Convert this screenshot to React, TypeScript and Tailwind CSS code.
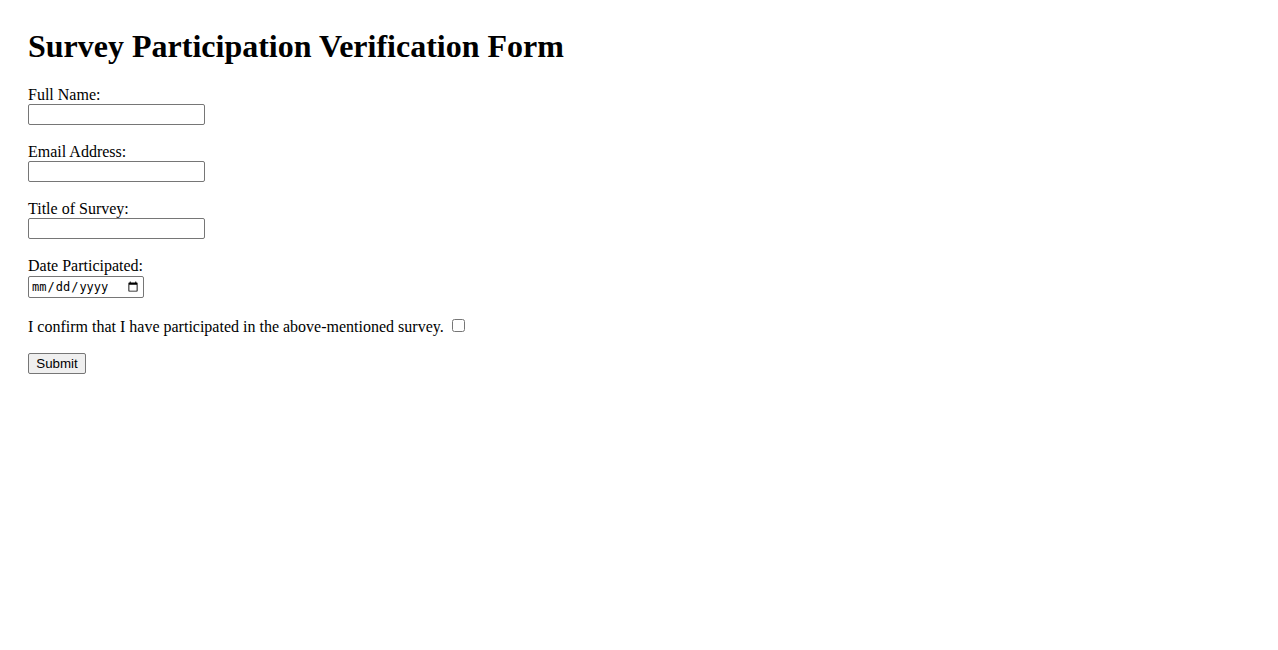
export default function App() {
  const fields = [
    { label: 'Full Name:', type: 'text' },
    { label: 'Email Address:', type: 'email' },
    { label: 'Title of Survey:', type: 'text' },
  ]

  return (
    <div className="min-h-[650px] bg-white p-[28px] font-['Liberation_Serif',serif] text-[16px] leading-[18px] text-black">
      <h1 className="mb-[21px] text-[32px] font-bold leading-[37px]">Survey Participation Verification Form</h1>

      <form className="flex flex-col items-start">
        {fields.map((f) => (
          <div key={f.label} className="mb-[18px] flex flex-col items-start">
            <label className="h-[18px]">{f.label}</label>
            <input
              type={f.type}
              className="h-[21px] w-[177px] rounded-[2px] border border-[#767676] bg-white px-[2px] font-['Liberation_Sans',sans-serif] text-[13.33px]"
            />
          </div>
        ))}

        <div className="mb-[18px] flex flex-col items-start">
          <label className="h-[19px]">Date Participated:</label>
          <input
            type="date"
            className="h-[22px] w-[116px] rounded-[2px] border border-[#767676] bg-white pl-[2px] pr-[2px] font-['DejaVu_Sans_Mono',monospace] text-[12px]"
          />
        </div>

        <div className="mb-[17px] flex h-[20px] items-start">
          <label className="pt-[2px]">I confirm that I have participated in the above-mentioned survey.</label>
          <input type="checkbox" className="ml-[8px] mt-[3px] h-[13px] w-[13px]" />
        </div>

        <button
          type="submit"
          className="h-[21px] w-[58px] rounded-[2px] border border-[#767676] bg-[#efefef] font-['Liberation_Sans',sans-serif] text-[13.33px] leading-[17px]"
        >
          Submit
        </button>
      </form>
    </div>
  )
}
